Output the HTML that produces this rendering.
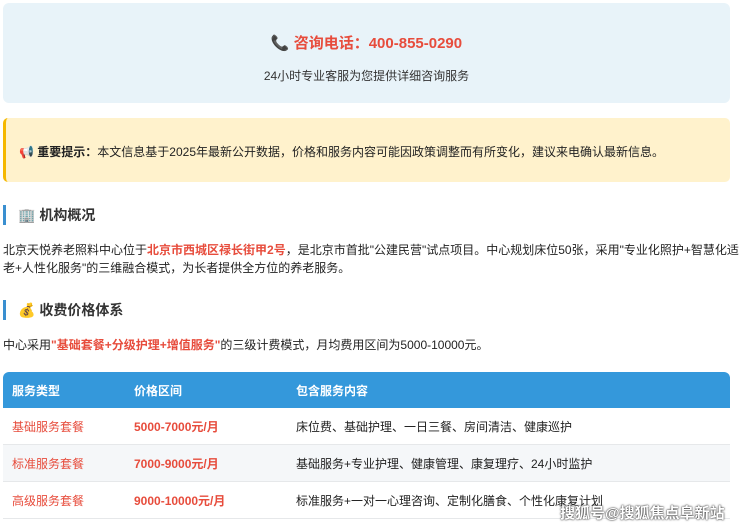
<!DOCTYPE html>
<html><head><meta charset="utf-8"><style>
body{margin:0;width:740px;height:526px;overflow:hidden;background:#fff;font-family:"Liberation Sans","Noto Sans CJK SC",sans-serif;color:#222;font-size:12px;}
.box1{position:absolute;left:3px;top:3px;width:727px;height:100px;background:#e8f3f9;border-radius:6px;text-align:center;}
.phone{position:absolute;top:29px;width:100%;font-size:15px;font-weight:bold;color:#e74c3c;}
.sub{position:absolute;top:64px;width:100%;font-size:12px;color:#333;}
.box2{position:absolute;left:3px;top:118px;width:724px;height:64px;background:#fff2cc;border-left:3px solid #f5b800;border-radius:5px;}
.box2 div{position:absolute;left:13px;top:25px;font-size:12px;}
.h{position:absolute;left:3px;height:20px;border-left:3px solid #3a8fd0;padding-left:12px;font-size:14px;font-weight:bold;line-height:20px;color:#333;}
.p{position:absolute;left:3px;width:736px;line-height:18px;font-size:12px;}
.r{color:#e74c3c;font-weight:bold;}
table{position:absolute;left:3px;top:372px;width:727px;border-collapse:collapse;font-size:12px;}
th{background:#3498db;color:#fff;text-align:left;height:36px;padding:0 0 0 9px;font-weight:bold;}
th:first-child{border-top-left-radius:6px}
th:last-child{border-top-right-radius:6px}
td{height:36px;padding:0 0 0 9px;border-bottom:1px solid #e6e8ea;}
tr:nth-child(3) td{background:#f5f7f9;}
.wm{position:absolute;left:560px;top:502px;font-size:15px;color:#fff;font-weight:bold;text-shadow:0 0 2px #333,0 0 1px #333;}
</style></head><body>
<div class="box1"><div class="phone">📞 咨询电话：400-855-0290</div><div class="sub">24小时专业客服为您提供详细咨询服务</div></div>
<div class="box2"><div>📢 <b>重要提示：</b>本文信息基于2025年最新公开数据，价格和服务内容可能因政策调整而有所变化，建议来电确认最新信息。</div></div>
<div class="h" style="top:205px">🏢 机构概况</div>
<div class="p" style="top:241px">北京天悦养老照料中心位于<span class="r">北京市西城区禄长街甲2号</span>，是北京市首批"公建民营"试点项目。中心规划床位50张，采用"专业化照护+智慧化适<br>老+人性化服务"的三维融合模式，为长者提供全方位的养老服务。</div>
<div class="h" style="top:300px">💰 收费价格体系</div>
<div class="p" style="top:336px">中心采用<span class="r">"基础套餐+分级护理+增值服务"</span>的三级计费模式，月均费用区间为5000-10000元。</div>
<table>
<tr><th style="width:113px">服务类型</th><th style="width:153px">价格区间</th><th>包含服务内容</th></tr>
<tr><td class="r" style="font-weight:normal">基础服务套餐</td><td class="r">5000-7000元/月</td><td>床位费、基础护理、一日三餐、房间清洁、健康巡护</td></tr>
<tr><td class="r" style="font-weight:normal">标准服务套餐</td><td class="r">7000-9000元/月</td><td>基础服务+专业护理、健康管理、康复理疗、24小时监护</td></tr>
<tr><td class="r" style="font-weight:normal">高级服务套餐</td><td class="r">9000-10000元/月</td><td>标准服务+一对一心理咨询、定制化膳食、个性化康复计划</td></tr>
</table>
<div class="wm">搜狐号@搜狐焦点阜新站</div>
</body></html>
